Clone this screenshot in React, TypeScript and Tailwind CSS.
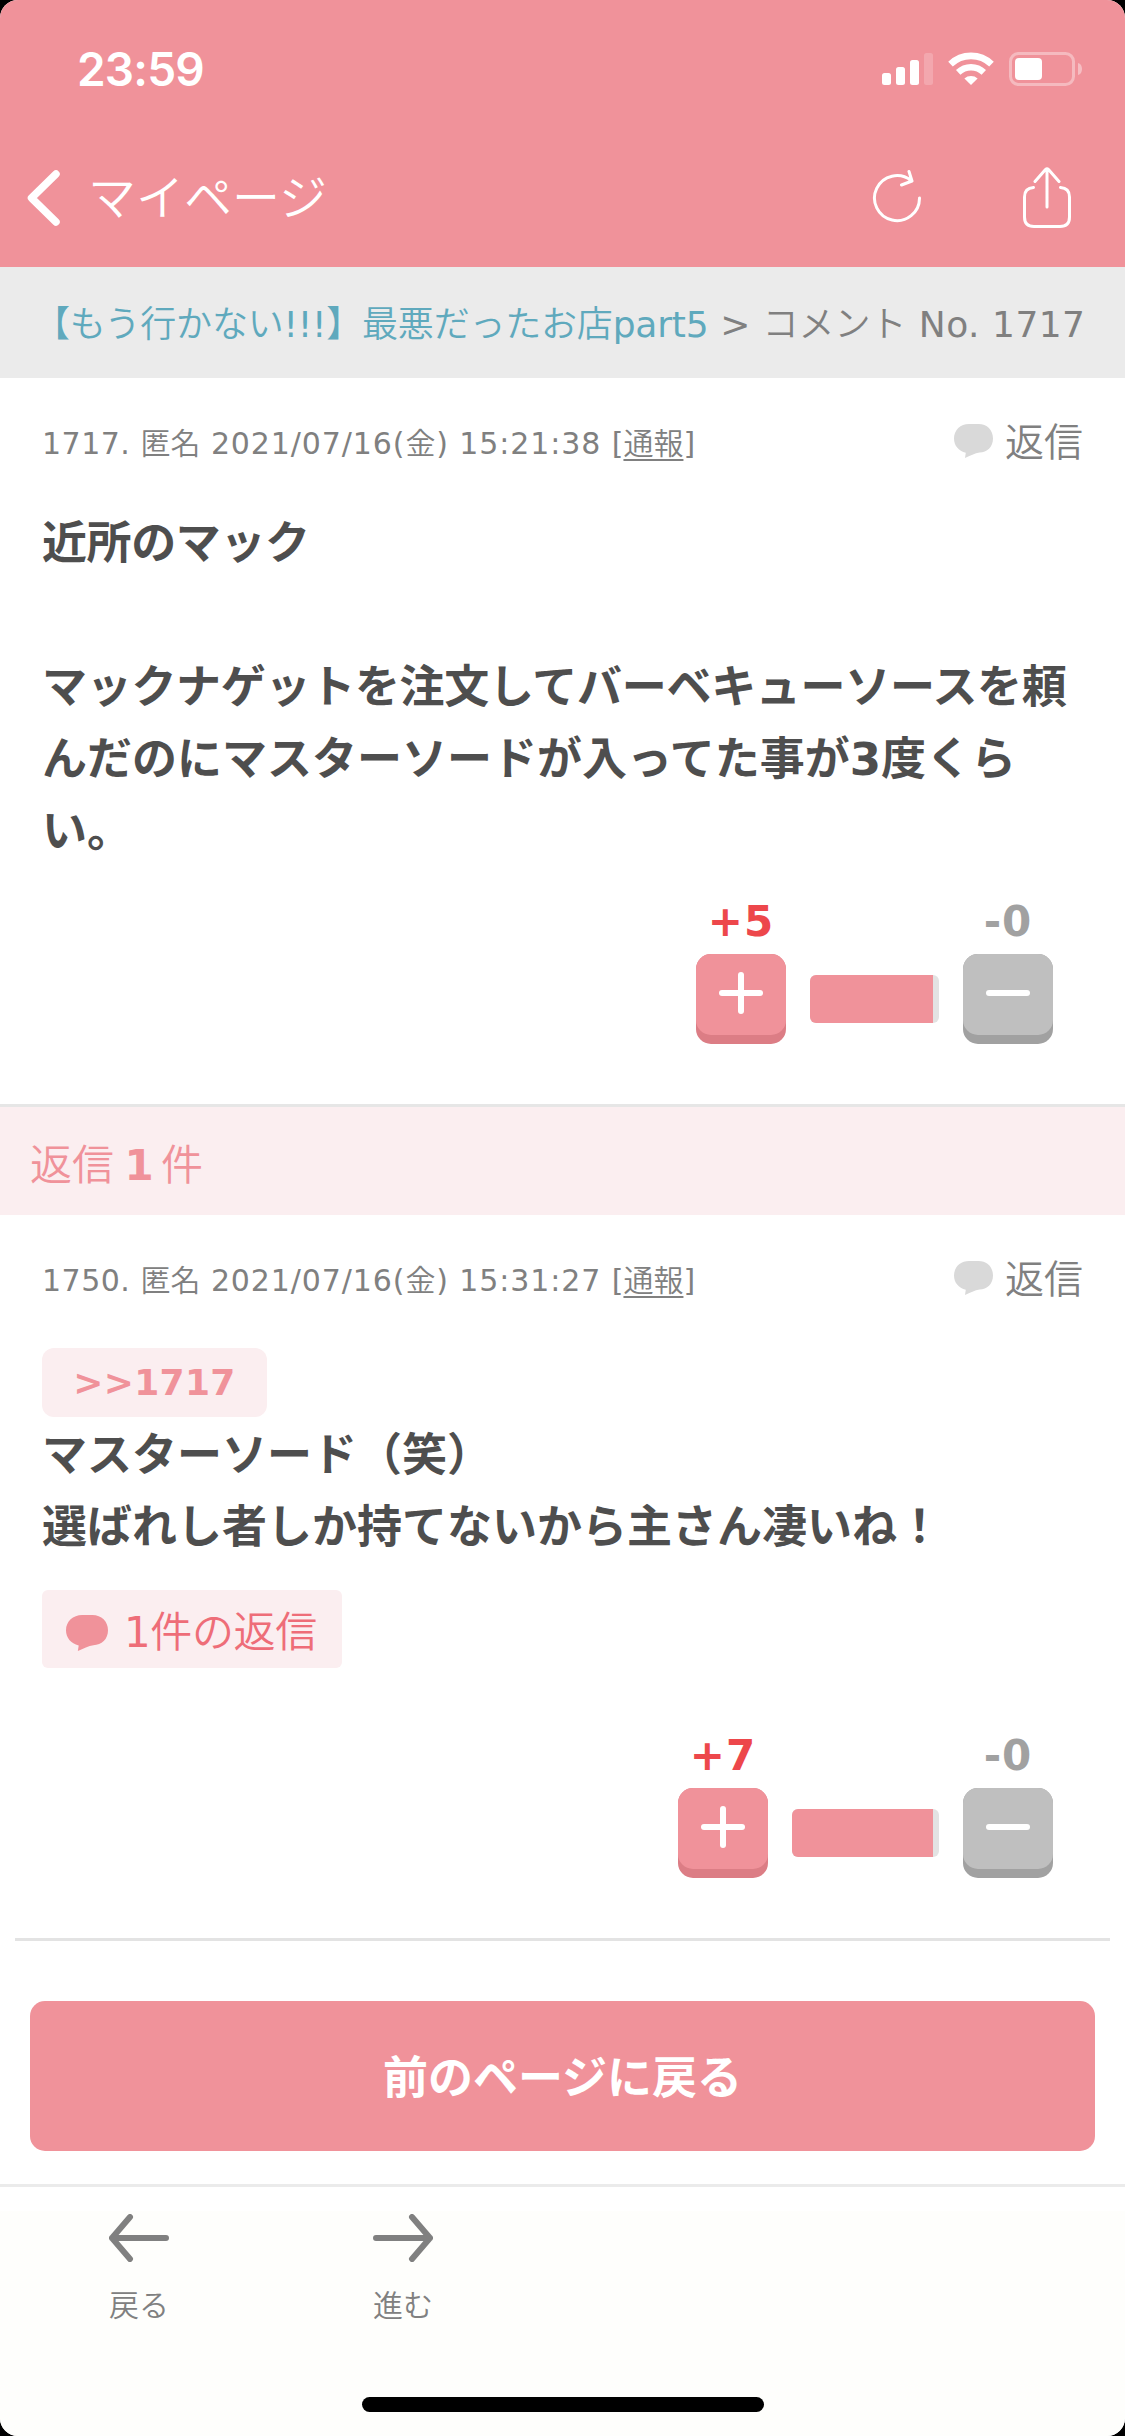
import type { ReactNode } from 'react';

interface CommentMeta {
  no: number;
  date: string;
  weekday: string;
  time: string;
}

interface VotesProps {
  plus: number;
  minus: number;
  barWidth: number;
}

/** Japanese text in the thin weight; the latin part stays in the page font */
function Ja({ className = '', children }: { className?: string; children: ReactNode }) {
  return (
    <span className={`font-['Noto_Sans_CJK_JP',sans-serif] font-[350] ${className}`}>
      {children}
    </span>
  );
}

function StatusIcons() {
  return (
    <svg width="200" height="34" viewBox="0 0 200 34" fill="none">
      {/* Signal */}
      <rect x="0" y="21" width="9" height="12" rx="2.5" fill="#fff" />
      <rect x="14" y="15" width="9" height="18" rx="2.5" fill="#fff" />
      <rect x="28" y="8" width="9" height="25" rx="2.5" fill="#fff" />
      <rect x="42" y="1" width="9" height="32" rx="2.5" fill="#fff" fillOpacity="0.2" />
      {/* Wifi */}
      <path d="M68.5 12.2a29.5 29.5 0 0 1 41 0" stroke="#fff" strokeWidth="6.6" />
      <path d="M76.2 20.4a18.5 18.5 0 0 1 25.6 0" stroke="#fff" strokeWidth="6.4" />
      <path d="M82.4 26.6a10 10 0 0 1 13.2 0L89 33z" fill="#fff" />
      {/* Battery */}
      <rect
        x="128.5"
        y="1.5"
        width="63"
        height="31"
        rx="8"
        stroke="#fff"
        strokeOpacity="0.37"
        strokeWidth="3"
      />
      <rect x="133" y="6" width="27" height="22" rx="4" fill="#fff" />
      <path d="M196 11c2.6.6 4 3 4 6s-1.4 5.4-4 6z" fill="#fff" fillOpacity="0.4" />
    </svg>
  );
}

function Bubble({ className }: { className: string }) {
  return (
    <svg viewBox="0 0 39 34" preserveAspectRatio="none" className={className} fill="currentColor">
      <path d="M15 0h9.5C33 0 39 6 39 14.500S33 28.500 25.500 28.500C21 29 16 32 11 34l.8-5.200C4.500 27 0 21.500 0 14.500 0 6 6.500 0 15 0z" />
    </svg>
  );
}

function Meta({ no, date, weekday, time }: CommentMeta) {
  return (
    <div className="flex h-[42px] items-center justify-between text-[#808080]">
      <p className="text-[30px] leading-[42px] whitespace-nowrap">
        <span className="tracking-[0.5px]">{no}. </span>
        <Ja>匿名</Ja>
        <span className="tracking-[0.9px]">
          {' '}
          {date}(<Ja>{weekday}</Ja>) {time}{' '}
        </span>
        [<Ja className="underline decoration-2 underline-offset-[5px]">通報</Ja>]
      </p>
      <div className="flex items-center text-[39px] leading-[42px]">
        <Bubble className="mr-3 mb-0.5 h-[34px] w-[39px] text-[#d9d9d9]" />
        <Ja className="-mt-1.5">返信</Ja>
      </div>
    </div>
  );
}

function VoteButton({ label, type }: { label: string; type: 'plus' | 'minus' }) {
  const plus = type === 'plus';

  return (
    <div className="flex w-[90px] flex-col items-center">
      <span
        className={`text-[42px] leading-[60px] font-bold tracking-[1px] ${plus ? 'text-[#ed474b]' : 'text-[#a1a1a1]'}`}
      >
        {label}
      </span>
      <button
        type="button"
        className={`mt-0.5 h-[90px] w-[90px] rounded-[15px] ${plus ? 'bg-[#dc7d85]' : 'bg-[#a1a1a1]'}`}
      >
        <svg
          viewBox="0 0 90 81"
          className={`-mt-[9px] h-[81px] w-[90px] rounded-[15px] ${plus ? 'bg-[#f0929a]' : 'bg-[#bfbfbf]'}`}
          stroke="#fff"
          strokeWidth="6"
          strokeLinecap="round"
        >
          <path d="M26 39h38" />
          {plus && <path d="M45 21v36" />}
        </svg>
      </button>
    </div>
  );
}

function Votes({ plus, minus, barWidth }: VotesProps) {
  return (
    <div className="flex items-end justify-end gap-6 pr-[30px]">
      <VoteButton type="plus" label={`+${plus}`} />
      <div
        className="mb-[21px] h-12 overflow-hidden rounded-md bg-[#e3e3e3] pr-1.5"
        style={{ width: barWidth }}
      >
        <div className="h-full bg-[#f0929a]" />
      </div>
      <VoteButton type="minus" label={`-${minus}`} />
    </div>
  );
}

function ToolbarItem({ label, children }: { label: string; children: ReactNode }) {
  return (
    <button type="button" className="flex w-[264px] flex-col items-center text-[#808080]">
      <svg
        width="60"
        height="48"
        viewBox="0 0 60 48"
        fill="none"
        stroke="currentColor"
        strokeWidth="6"
        strokeLinecap="round"
        strokeLinejoin="round"
      >
        {children}
      </svg>
      <Ja className="mt-5 text-[30px] leading-[42px]">{label}</Ja>
    </button>
  );
}

export default function App() {
  return (
    <div className="h-[2436px] w-[1125px] bg-black">
      <div className="flex h-full flex-col overflow-hidden rounded-[18px] bg-white font-['DejaVu_Sans','Noto_Sans_CJK_JP',sans-serif]">
        {/* Header */}
        <header className="h-[267px] shrink-0 bg-[#f0929a] text-white">
          <div className="flex h-[138px] items-center justify-between pr-[43px] pl-[77px]">
            <span className="font-['Inter',sans-serif] text-[46px] font-semibold tracking-[-0.8px]">
              23:59
            </span>
            <StatusIcons />
          </div>
          <div className="flex h-[120px] items-center pr-[54px] pl-[27px]">
            <svg
              width="34"
              height="56"
              viewBox="0 0 34 56"
              fill="none"
              stroke="currentColor"
              strokeWidth="7.5"
              strokeLinecap="round"
              strokeLinejoin="round"
            >
              <path d="M29 4 4.5 28 29 52" />
            </svg>
            <Ja className="-mt-2 ml-[27px] flex-1 text-[48px] leading-[60px]">マイページ</Ja>
            <svg
              width="50"
              height="62"
              viewBox="0 0 50 62"
              className="mr-[101px]"
              fill="none"
              stroke="currentColor"
              strokeWidth="3"
              strokeLinecap="round"
              strokeLinejoin="round"
            >
              <path d="M47.5 31A22.5 22.5 0 1 1 39 13.5M37 4.5 40 14l-10.5 4" />
            </svg>
            <svg
              width="48"
              height="62"
              viewBox="0 0 48 62"
              fill="none"
              stroke="currentColor"
              strokeWidth="3"
              strokeLinecap="round"
              strokeLinejoin="round"
            >
              <path d="M24 40V2M12 14.5 22.5 2.5q1.5-1.5 3 0L36 14.5M10.5 20.5Q1.5 21 1.5 30v20q0 9.500 9.500 9.500h26q9.500 0 9.500-9.500V30q0-9-9-9.500" />
            </svg>
          </div>
        </header>

        {/* Breadcrumb */}
        <nav className="h-[111px] shrink-0 bg-[#ebebeb] pl-[34px] text-[36px] leading-[109px] whitespace-nowrap text-[#808080] [word-spacing:0.5px]">
          <span className="tracking-[-0.2px] text-[#5fa9bd]">
            <Ja>【もう行かない</Ja>!!!<Ja>】最悪だったお店</Ja>part5
          </span>{' '}
          &gt; <Ja>コメント</Ja>
          <span className="tracking-[0.4px]"> No. 1717</span>
        </nav>

        {/* Comment */}
        <article className="h-[726px] shrink-0 px-[42px] pt-[43px]">
          <Meta no={1717} date="2021/07/16" weekday="金" time="15:21:38" />
          <p className="mt-[45px] text-[45px] leading-[72px] font-bold text-[#4e4e4e]">
            <span className="tracking-[-0.4px]">近所のマック</span>
            <br />
            <br />
            <span className="tracking-[-0.3px]">マックナゲットを注文してバーベキューソースを頼</span>
            んだのにマスターソードが入ってた事が3度くらい。
          </p>
          <div className="mt-6">
            <Votes plus={5} minus={0} barWidth={129} />
          </div>
        </article>

        {/* Replies */}
        <h2 className="h-[111px] shrink-0 border-t-[3px] border-[#e6e6e6] bg-[#fbeef0] pl-[30px] text-[42px] leading-[109px] text-[#f0929a] [word-spacing:-3px]">
          <Ja>返信</Ja> <b>1</b> <Ja className="-ml-[3px]">件</Ja>
        </h2>
        <article className="mx-[15px] h-[726px] shrink-0 border-b-[3px] border-[#e3e3e3] px-[27px] pt-[43px]">
          <Meta no={1750} date="2021/07/16" weekday="金" time="15:31:27" />
          <div className="mt-12 flex h-[69px] w-[225px] items-center justify-center rounded-xl bg-[#fbeef0] text-[36px] font-bold tracking-[0.3px] text-[#f0929a]">
            &gt;&gt;1717
          </div>
          <p className="pt-[3px] text-[45px] leading-[72px] font-bold text-[#4e4e4e]">
            マスターソード（笑）
            <br />
            選ばれし者しか持てないから主さん凄いね！
          </p>
          <div className="mt-[26px] flex h-[78px] w-[300px] items-center rounded-md bg-[#fbeef0] pl-6 text-[42px] text-[#ee6d78]">
            <Bubble className="mt-[7px] mr-4 h-9 w-[42px] text-[#f0929a]" />
            <span className="pt-0.5 tracking-[-0.4px]">
              1<Ja>件の返信</Ja>
            </span>
          </div>
          <div className="mt-[58px]">
            <Votes plus={7} minus={0} barWidth={147} />
          </div>
        </article>

        <button
          type="button"
          className="mx-[30px] mt-[60px] h-[150px] shrink-0 rounded-[15px] bg-[#f0929a] pt-[5px] text-[45px] font-bold text-white"
        >
          前のページに戻る
        </button>

        {/* Bottom toolbar */}
        <footer className="mt-[33px] flex flex-1 flex-col border-t-[3px] border-[#ebebeb] bg-[#fefefc]">
          <div className="h-6 bg-white" />
          <div className="flex flex-1 pt-[3px] pl-[7px]">
            <ToolbarItem label="戻る">
              <path d="M57 24H3M21 3 3 24l18 21" />
            </ToolbarItem>
            <ToolbarItem label="進む">
              <path d="M3 24h54M39 3l18 21-18 21" />
            </ToolbarItem>
          </div>
          <div className="mx-auto mb-6 h-[15px] w-[402px] rounded-full bg-black" />
        </footer>
      </div>
    </div>
  );
}
